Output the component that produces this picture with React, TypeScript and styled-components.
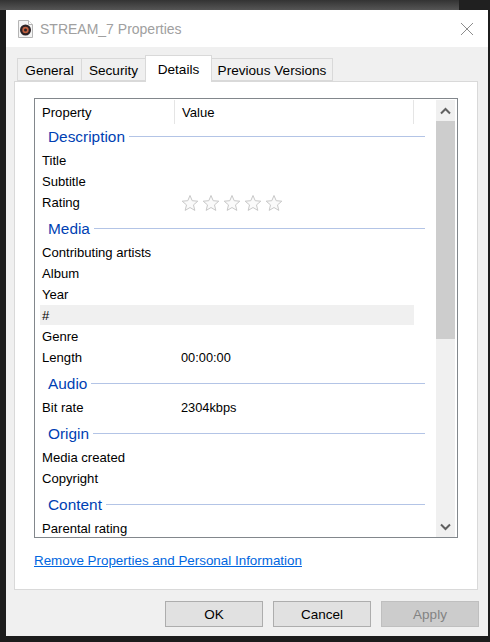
import React from "react";
import styled, { createGlobalStyle } from "styled-components";

const Global = createGlobalStyle`
  html, body { margin: 0; padding: 0; background: #1c1c1c; }
  * { box-sizing: border-box; }
`;

const Screen = styled.div`
  width: 490px; height: 642px; overflow: hidden;
  display: flex; flex-direction: column;
  background: #1c1c1c;
  font-family: "Liberation Sans", Arial, sans-serif;
  font-size: 13.1px; color: #000;
`;
const TopStrip = styled.div`
  height: 10px; flex: none; display: flex;
`;
const TopLight = styled.div`
  flex: 1; background: linear-gradient(#333333, #555555);
`;
const TopDark = styled.div`
  width: 31px; background: #202020;
`;
const Dialog = styled.div`
  width: 482px; height: 626px; margin-left: 6px;
  background: #f0f0f0;
  display: flex; flex-direction: column;
`;
const TitleBar = styled.div`
  height: 37px; flex: none; background: #fff;
  display: flex; align-items: center; padding: 0 14px 0 12px;
`;
const TitleText = styled.div`
  flex: 1; margin-left: 6px; font-size: 14px; color: #a0a0a0;
`;
const TabStrip = styled.div`
  height: 34px; flex: none; padding: 8px 0 0 12px;
  display: flex; align-items: flex-end;
  position: relative; z-index: 1;
`;
const Tab = styled.div<{ $w: number; $active?: boolean }>`
  width: ${p => p.$w}px;
  height: ${p => (p.$active ? 27 : 23)}px;
  margin-bottom: ${p => (p.$active ? -1 : 0)}px;
  background: ${p => (p.$active ? "#fff" : "#f0f0f0")};
  border: 1px solid #d9d9d9;
  border-bottom: ${p => (p.$active ? "none" : "1px solid #d9d9d9")};
  margin-left: -1px;
  display: flex; align-items: center; justify-content: center;
  padding-top: ${p => (p.$active ? 0 : 2)}px;
  font-size: 13.6px;
`;
const Panel = styled.div`
  width: 464px; height: 509px; margin-left: 8px; flex: none;
  background: #fff; border: 1px solid #d9d9d9;
  padding: 16px 19px 0;
  display: flex; flex-direction: column;
`;
const ListBox = styled.div`
  width: 424px; height: 440px; flex: none;
  border: 1px solid #82878c;
  display: flex; padding: 1px 2px 0 0;
  overflow: hidden;
`;
const ListContent = styled.div`
  flex: 1; min-width: 0; overflow: hidden;
`;
const ColumnHeader = styled.div`
  height: 24px; display: flex; align-items: center;
  width: 379px;
`;
const ColumnCell = styled.div<{ $w?: number }>`
  width: ${p => (p.$w ? `${p.$w}px` : "auto")};
  flex: ${p => (p.$w ? "none" : 1)};
  height: 100%;
  border-right: 1px solid #e5e5e5;
  padding-left: 7px;
  display: flex; align-items: center;
`;
const GroupHeader = styled.div<{ $first?: boolean }>`
  height: 26px; margin-top: ${p => (p.$first ? 0 : 3)}px;
  padding-bottom: 2px;
  display: flex; align-items: center; gap: 4px;
  padding-left: 13px; width: 390px;
  color: #003fb3; font-size: 15.4px;
`;
const GroupLabel = styled.span`
  margin-top: 2px;
`;
const GroupLine = styled.div`
  flex: 1; height: 1px; background: #b3c4e6;
`;
const Row = styled.div<{ $hl?: boolean }>`
  height: 21px; width: 379px; margin-left: 0;
  display: flex; align-items: center;
  position: relative;
  background: ${p => (p.$hl ? "linear-gradient(#f0f0f0, #f0f0f0) 5px 0 / 374px 20px no-repeat" : "none")};
`;
const PropName = styled.div`
  width: 139px; flex: none; padding-left: 7px;
`;
const PropValue = styled.div`
  flex: 1; padding-left: 7px; display: flex; gap: 3px; font-size: 12.8px;
`;
const Scrollbar = styled.div`
  width: 19px; flex: none; background: #f0f0f0;
  display: flex; flex-direction: column;
`;
const ScrollButton = styled.div`
  height: 21px; flex: none; display: flex; align-items: center; justify-content: center;
`;
const Track = styled.div`
  flex: 1; min-height: 0;
`;
const Thumb = styled.div`
  height: 218px; background: #cdcdcd;
`;
const RemoveLink = styled.a`
  margin-top: 14px; color: #0066e0; text-decoration: underline;
  font-size: 13.4px; line-height: 18px;
`;
const Footer = styled.div`
  display: flex; justify-content: flex-end; gap: 10px;
  padding: 11px 9px 0 0;
`;
const Button = styled.div<{ $disabled?: boolean }>`
  width: 98px; height: 26px;
  display: flex; align-items: center; justify-content: center;
  background: ${p => (p.$disabled ? "#cccccc" : "#e1e1e1")};
  border: 1px solid ${p => (p.$disabled ? "#bfbfbf" : "#adadad")};
  color: ${p => (p.$disabled ? "#838383" : "#000")};
  font-size: 13.5px;
`;

const Star = () => (
  <svg width="18" height="18" viewBox="0 0 18 18">
    <path d="M9 1.5l2.2 5.2 5.6.5-4.3 3.7 1.3 5.5L9 13.5l-4.8 2.9 1.3-5.5L1.2 7.2l5.6-.5z" fill="#fafafa" stroke="#c8c8c8" strokeWidth="1" />
  </svg>
);

const FileIcon = () => (
  <svg width="16" height="18" viewBox="0 0 16 18">
    <path d="M.5.5h10l4 4v13H.5z" fill="#f4f4f4" stroke="#b5b5b5" />
    <path d="M10.5.5v4h4" fill="#fff" stroke="#b5b5b5" />
    <circle cx="7.5" cy="10" r="5.5" fill="#2b2226" />
    <circle cx="7.5" cy="10" r="3.2" fill="#c2603f" />
    <circle cx="7.5" cy="10" r="1.5" fill="#2b2226" />
  </svg>
);

const CloseIcon = () => (
  <svg width="14" height="14" viewBox="0 0 14 14">
    <path d="M1 1l12 12M13 1L1 13" stroke="#8c8c8c" strokeWidth="1" fill="none" />
  </svg>
);

const Chevron = ({ up }: { up?: boolean }) => (
  <svg width="11" height="8" viewBox="0 0 11 8">
    <path d={up ? "M1 6.5l4.5-4.5 4.5 4.5" : "M1 1.5l4.5 4.5 4.5-4.5"} stroke="#606060" strokeWidth="2" fill="none" />
  </svg>
);

type Item = { g: string } | { n: string; v?: string; stars?: boolean; hl?: boolean };

const items: Item[] = [
  { g: "Description" },
  { n: "Title" }, { n: "Subtitle" }, { n: "Rating", stars: true },
  { g: "Media" },
  { n: "Contributing artists" }, { n: "Album" }, { n: "Year" }, { n: "#", hl: true }, { n: "Genre" }, { n: "Length", v: "00:00:00" },
  { g: "Audio" },
  { n: "Bit rate", v: "2304kbps" },
  { g: "Origin" },
  { n: "Media created" }, { n: "Copyright" },
  { g: "Content" },
  { n: "Parental rating" },
];

export default function App() {
  return (
    <Screen>
      <Global />
      <TopStrip><TopLight /><TopDark /></TopStrip>
      <Dialog>
        <TitleBar>
          <FileIcon />
          <TitleText>STREAM_7 Properties</TitleText>
          <CloseIcon />
        </TitleBar>
        <TabStrip>
          <Tab $w={65}>General</Tab>
          <Tab $w={65}>Security</Tab>
          <Tab $w={67} $active>Details</Tab>
          <Tab $w={122}>Previous Versions</Tab>
        </TabStrip>
        <Panel>
          <ListBox>
            <ListContent>
              <ColumnHeader>
                <ColumnCell $w={140}>Property</ColumnCell>
                <ColumnCell>Value</ColumnCell>
              </ColumnHeader>
              {items.map((it, i) =>
                "g" in it ? (
                  <GroupHeader key={i} $first={i === 0}>
                    <GroupLabel>{it.g}</GroupLabel>
                    <GroupLine />
                  </GroupHeader>
                ) : (
                  <Row key={i} $hl={it.hl}>
                    <PropName>{it.n}</PropName>
                    <PropValue>
                      {it.v}
                      {it.stars && [0, 1, 2, 3, 4].map(s => <Star key={s} />)}
                    </PropValue>
                  </Row>
                )
              )}
            </ListContent>
            <Scrollbar>
              <ScrollButton><Chevron up /></ScrollButton>
              <Thumb />
              <Track />
              <ScrollButton><Chevron /></ScrollButton>
            </Scrollbar>
          </ListBox>
          <RemoveLink>Remove Properties and Personal Information</RemoveLink>
        </Panel>
        <Footer>
          <Button>OK</Button>
          <Button>Cancel</Button>
          <Button $disabled>Apply</Button>
        </Footer>
      </Dialog>
    </Screen>
  );
}
